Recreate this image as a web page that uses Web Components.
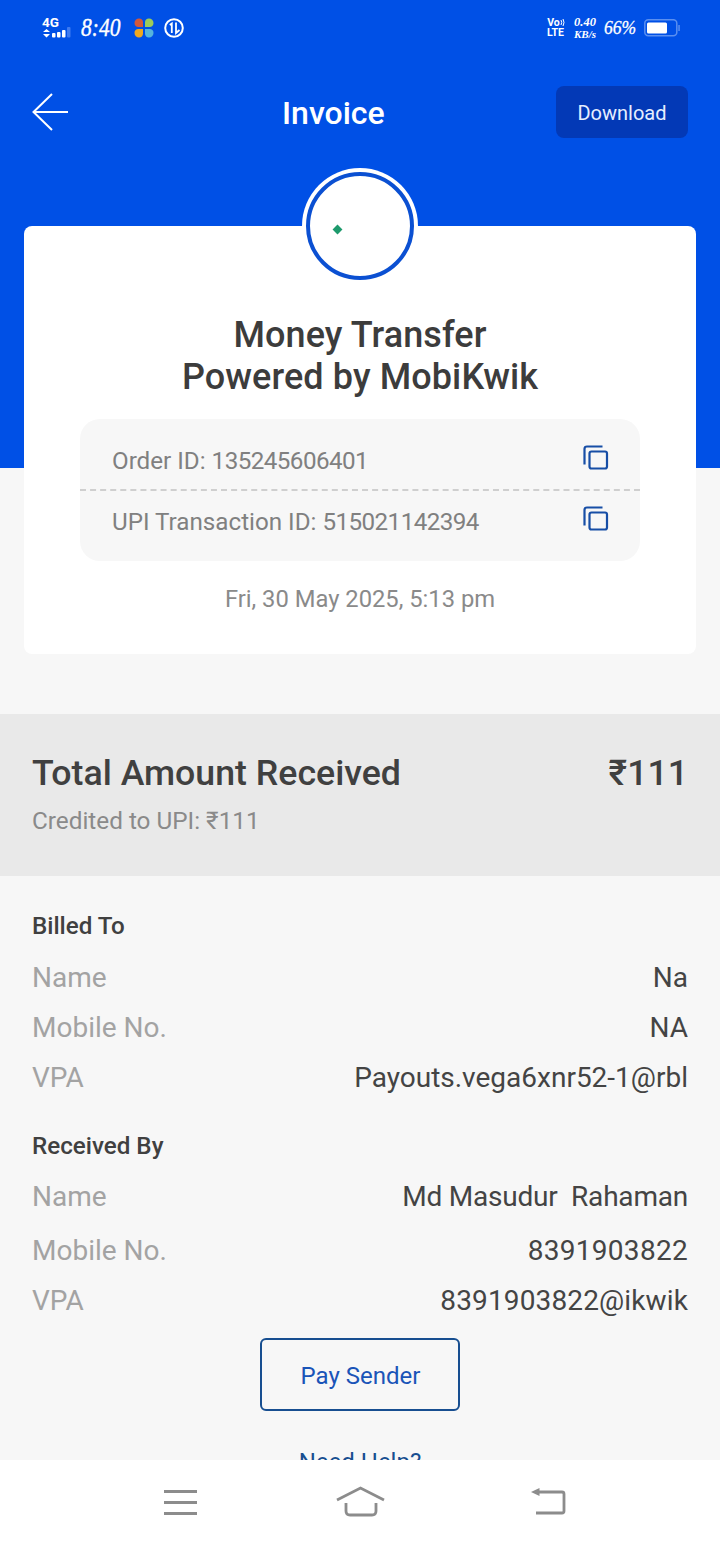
<!DOCTYPE html>
<html>
<head>
<meta charset="utf-8">
<title>Invoice</title>
<style>
  html, body { margin: 0; padding: 0; background: #f7f7f7; }
  body { width: 720px; height: 1544px; overflow: hidden; font-family: Roboto, "Noto Sans", sans-serif; }
  .wide { --value-spacing: .3px; }
  .slightly-wide { --value-spacing: .13px; }
  .tight { --value-spacing: -.21px; }
</style>
</head>
<body>
<invoice-screen>
  <status-bar slot="hero"></status-bar>
  <app-bar slot="hero" title="Invoice" action="Download"></app-bar>
  <invoice-card slot="hero"
    heading-one="Money Transfer" heading-two="Powered by MobiKwik"
    order-label="Order ID: " order="135245606401" upi-label="UPI Transaction ID: " upi="515021142394"
    date="Fri, 30 May 2025, 5:13 pm"></invoice-card>
  <total-band slot="body" label="Total Amount Received" amount="₹111" note="Credited to UPI: ₹111"></total-band>
  <detail-group slot="body" title="Billed To">
    <detail-row label="Name" value="Na"></detail-row>
    <detail-row label="Mobile No." value="NA"></detail-row>
    <detail-row label="VPA" value="Payouts.vega6xnr52-1@rbl"></detail-row>
  </detail-group>
  <detail-group slot="body" title="Received By" second>
    <detail-row class="tight" label="Name" value="Md Masudur&nbsp; Rahaman" tall></detail-row>
    <detail-row class="wide" label="Mobile No." value="8391903822" tall></detail-row>
    <detail-row class="slightly-wide" label="VPA" value="8391903822@ikwik" short></detail-row>
  </detail-group>
  <pay-actions slot="body"></pay-actions>
  <nav-bar slot="nav"></nav-bar>
</invoice-screen>

<script>
// Whole screen: blue hero behind the card, scroll area cut off by the nav bar
class InvoiceScreen extends HTMLElement {
  constructor() {
    super();
    this.attachShadow({ mode: 'open' });
    this.shadowRoot.innerHTML = `
      <style>
        :host { display: flex; flex-direction: column; height: 1544px; background: #f7f7f7; }
        .scroll { flex: 1; min-height: 0; overflow: hidden; }
        .hero { background: linear-gradient(#0050e6 468px, transparent 468px); }
      </style>
      <div class="scroll">
        <div class="hero"><slot name="hero"></slot></div>
        <slot name="body"></slot>
      </div>
      <slot name="nav"></slot>
    `;
  }
}

class StatusBar extends HTMLElement {
  constructor() {
    super();
    this.attachShadow({ mode: 'open' });
    this.shadowRoot.innerHTML = `
      <style>
        :host { display: flex; justify-content: space-between; align-items: center; height: 56px; padding: 0 40px 0 42px; color: #fff; }
        .side { display: flex; align-items: center; }
        .time, .pct, .speed { font-family: "Liberation Serif", serif; font-style: italic; }
        .time { font-size: 25px; width: 39px; white-space: nowrap; margin: 0 14px 0 8px; -webkit-text-stroke: .4px #fff; transform: scaleX(.86); transform-origin: left center; }
        .volte { font: 700 10.500px/10px Roboto, sans-serif; text-align: center; margin-right: 10px; width: 17px; white-space: nowrap; }
        .volte svg { display: inline-block; vertical-align: top; margin-right: -2px; }
        .speed { font-weight: 700; font-size: 11px; line-height: 12px; text-align: center; margin-right: 8px; width: 22px; white-space: nowrap; }
        .speed b { font-size: 12.500px; }
        .pct { font-size: 19.500px; width: 32px; white-space: nowrap; -webkit-text-stroke: .3px #fff; margin-right: 8px; transform: scaleX(.9); transform-origin: left center; }
        svg { display: block; }
      </style>
      <div class="side">
        <svg width="31" height="30" viewBox="0 -4 31 30">
          <text x="0" y="10" font-family="Roboto, sans-serif" font-weight="700" font-size="13.500" fill="#fff">4G</text>
          <path d="M1 15l3.500-3 3.500 3zM1 17h7l-3.500 3.500z" fill="#fff"/>
          <rect x="10" y="16" width="3.500" height="4.500" rx="1" fill="#fff"/>
          <rect x="15" y="15" width="3.500" height="5.500" rx="1" fill="#fff"/>
          <rect x="20" y="13" width="3.500" height="7.500" rx="1" fill="#fff"/>
          <rect x="25" y="10" width="3.500" height="10.500" rx="1" fill="#3f7bf0"/>
        </svg>
        <span class="time">8:40</span>
        <svg width="20" height="20" viewBox="0 0 20 20" style="margin-right:10px">
          <path d="M9 9H4.500A3.800 3.800 0 0 1 .5 5 4.500 4.500 0 0 1 5 .5 3.800 3.800 0 0 1 9 4.500z" fill="#d2583a"/>
          <path d="M9 9H4.500A3.800 3.800 0 0 1 .5 5 4.500 4.500 0 0 1 5 .5 3.800 3.800 0 0 1 9 4.500z" fill="#9ccb5a" transform="rotate(90 10 10)"/>
          <path d="M9 9H4.500A3.800 3.800 0 0 1 .5 5 4.500 4.500 0 0 1 5 .5 3.800 3.800 0 0 1 9 4.500z" fill="#55b4dc" transform="rotate(180 10 10)"/>
          <path d="M9 9H4.500A3.800 3.800 0 0 1 .5 5 4.500 4.500 0 0 1 5 .5 3.800 3.800 0 0 1 9 4.500z" fill="#f0a81e" transform="rotate(270 10 10)"/>
        </svg>
        <svg width="20" height="20" viewBox="0 0 20 20">
          <circle cx="10" cy="10" r="8.800" fill="none" stroke="#fff" stroke-width="2"/>
          <path d="M5.800 7l2-1.500V15M12 4.500V15l3.500-3" fill="none" stroke="#fff" stroke-width="1.800"/>
        </svg>
      </div>
      <div class="side">
        <div class="volte">Vo<svg width="6" height="9" viewBox="0 0 6 9" fill="none" stroke="#fff" stroke-width="1"><path d="M1 2q1.500 2.500 0 5M3 1q2 3.500 0 7"/></svg><br>LTE</div>
        <div class="speed"><b>0.40</b><br>KB/s</div>
        <span class="pct">66%</span>
        <svg width="36" height="18" viewBox="0 0 36 18">
          <rect x=".8" y=".8" width="32" height="16" rx="3.500" fill="none" stroke="#5a8ff0" stroke-width="1.500"/>
          <rect x="3" y="3.500" width="20" height="11" rx="1.500" fill="#fff"/>
          <rect x="34.300" y="6" width="1.500" height="6" fill="#5a8ff0"/>
        </svg>
      </div>
    `;
  }
}

class AppBar extends HTMLElement {
  constructor() {
    super();
    this.attachShadow({ mode: 'open' });
    this.shadowRoot.innerHTML = `
      <style>
        :host { display: grid; grid-template-columns: 250px auto 1fr; align-items: center; height: 112px; padding: 0 32px; box-sizing: border-box; }
        svg { display: block; }
        h1 { margin: 0; color: #fff; font: 500 32px/38px Roboto, sans-serif; padding-top: 2px; }
        button { justify-self: end; width: 132px; height: 52px; border: 0; border-radius: 8px; background: #0339b6; color: #e6eeff; font: 400 20px Roboto, sans-serif; padding: 2px 0 0; }
      </style>
      <svg width="38" height="38" viewBox="0 0 38 38">
        <path d="M20 1L1.500 19 20 37M1.500 19H36" fill="none" stroke="#fff" stroke-width="2"/>
      </svg>
      <h1></h1>
      <button></button>
    `;
    this.shadowRoot.querySelector('h1').textContent = this.getAttribute('title');
    this.shadowRoot.querySelector('button').textContent = this.getAttribute('action');
  }
}

class CopyIcon extends HTMLElement {
  constructor() {
    super();
    this.attachShadow({ mode: 'open' });
    this.shadowRoot.innerHTML = `
      <style>:host { display: block; width: 26px; height: 26px; margin-bottom: 6px; } svg { display: block; }</style>
      <svg width="26" height="26" viewBox="0 0 26 26" fill="none" stroke="#174ea6" stroke-width="2.200" stroke-linejoin="round">
        <path d="M19.500 1.500H4Q1.500 1.500 1.500 4v15.500"/>
        <rect x="6.500" y="6.500" width="17.500" height="17" rx="2"/>
      </svg>
    `;
  }
}

class InvoiceCard extends HTMLElement {
  constructor() {
    super();
    this.attachShadow({ mode: 'open' });
    this.shadowRoot.innerHTML = `
      <style>
        :host { display: block; margin: 0 24px; }
        .logo { position: relative; z-index: 1; box-sizing: border-box; width: 116px; height: 116px; margin: 0 auto -58px; border-radius: 50%; background: #fff; padding: 4px; }
        .ring { box-sizing: border-box; width: 108px; height: 108px; border-radius: 50%; border: 4px solid #0b50d2; background: #fff; padding: 50px 0 0 24px; }
        .dot { display: block; width: 7px; height: 7px; background: #1d9a6c; transform: rotate(45deg); }
        .card { background: #fff; border-radius: 8px; height: 428px; box-sizing: border-box; padding-top: 88px; display: flex; flex-direction: column; align-items: center; }
        h2 { margin: 0; font: 500 36px/42px Roboto, sans-serif; letter-spacing: .1px; color: #3c3c3c; text-align: center; }
        .ids { width: 560px; margin-top: 21px; background: #f7f7f7; border-radius: 20px; height: 142px; box-sizing: border-box; color: #808080; font-size: 24.200px; }
        .id { display: flex; justify-content: space-between; align-items: center; height: 70px; padding: 14px 31px 0 32px; box-sizing: border-box; }
        .id + .id { height: 72px; border-top: 2px dashed #cfcfcf; padding: 0 31px 8px 32px; }
        .num { letter-spacing: -.55px; }
        .date { margin-top: 24px; color: #8a8a8a; font-size: 23.750px; line-height: 28px; }
      </style>
      <div class="logo"><div class="ring"><i class="dot"></i></div></div>
      <div class="card">
        <h2><span id="h1"></span><br><span id="h2"></span></h2>
        <div class="ids">
          <div class="id"><span><span id="orderLabel"></span><span class="num" id="order"></span></span><copy-icon></copy-icon></div>
          <div class="id"><span><span id="upiLabel"></span><span class="num" id="upi"></span></span><copy-icon></copy-icon></div>
        </div>
        <div class="date" id="date"></div>
      </div>
    `;
    const $ = id => this.shadowRoot.getElementById(id);
    $('h1').textContent = this.getAttribute('heading-one');
    $('h2').textContent = this.getAttribute('heading-two');
    $('orderLabel').textContent = this.getAttribute('order-label');
    $('order').textContent = this.getAttribute('order');
    $('upiLabel').textContent = this.getAttribute('upi-label');
    $('upi').textContent = this.getAttribute('upi');
    $('date').textContent = this.getAttribute('date');
  }
}

class TotalBand extends HTMLElement {
  constructor() {
    super();
    this.attachShadow({ mode: 'open' });
    this.shadowRoot.innerHTML = `
      <style>
        :host { display: block; margin-top: 60px; height: 162px; box-sizing: border-box; padding: 37px 32px 0; background: #e9e9e9; }
        .top { display: flex; justify-content: space-between; color: #404040; font: 500 35.700px/44px Roboto, sans-serif; }
        .note { margin-top: 10px; color: #8a8a8a; font: 400 24.300px/32px Roboto, sans-serif; }
      </style>
      <div class="top"><span id="label"></span><span id="amount"></span></div>
      <div class="note" id="note"></div>
    `;
    this.shadowRoot.getElementById('label').textContent = this.getAttribute('label');
    this.shadowRoot.getElementById('amount').textContent = this.getAttribute('amount');
    this.shadowRoot.getElementById('note').textContent = this.getAttribute('note');
  }
}

class DetailGroup extends HTMLElement {
  constructor() {
    super();
    this.attachShadow({ mode: 'open' });
    this.shadowRoot.innerHTML = `
      <style>
        :host { display: block; padding: 34px 32px 0; }
        :host([second]) { padding-top: 27px; }
        h3 { margin: 0 0 11px; color: #404040; font: 500 24.200px/32px Roboto, sans-serif; }
        :host([second]) h3 { margin-bottom: 8px; }
      </style>
      <h3></h3>
      <slot></slot>
    `;
    this.shadowRoot.querySelector('h3').textContent = this.getAttribute('title');
  }
}

class DetailRow extends HTMLElement {
  constructor() {
    super();
    this.attachShadow({ mode: 'open' });
    this.shadowRoot.innerHTML = `
      <style>
        :host { display: flex; justify-content: space-between; align-items: center; height: 50px; font: 400 28px/34px Roboto, sans-serif; }
        :host([tall]) { height: 54px; }
        :host([short]) { height: 46px; }
        .label { color: #a3a3a3; }
        .value { color: #444; letter-spacing: var(--value-spacing, 0); }
      </style>
      <span class="label"></span><span class="value"></span>
    `;
    this.shadowRoot.querySelector('.label').textContent = this.getAttribute('label');
    this.shadowRoot.querySelector('.value').textContent = this.getAttribute('value');
  }
}

class PayActions extends HTMLElement {
  constructor() {
    super();
    this.attachShadow({ mode: 'open' });
    this.shadowRoot.innerHTML = `
      <style>
        :host { display: flex; flex-direction: column; align-items: center; padding-top: 14px; }
        button { width: 200px; height: 73px; background: transparent; border: 2px solid #174e90; border-radius: 6px; color: #1a54b8; font: 400 24px Roboto, sans-serif; padding: 2px 0 0 1px; }
        a { margin-top: 36px; color: #174e90; font: 400 24px/30px Roboto, sans-serif; }
      </style>
      <button>Pay Sender</button>
      <a>Need Help?</a>
    `;
  }
}

class NavBar extends HTMLElement {
  constructor() {
    super();
    this.attachShadow({ mode: 'open' });
    this.shadowRoot.innerHTML = `
      <style>
        :host { flex: none; display: flex; align-items: flex-start; height: 84px; box-sizing: border-box; padding: 26px 0 0 163px; background: #fff; }
        svg { display: block; }
      </style>
      <svg width="35" height="30" viewBox="0 0 35 30" fill="none" stroke="#8c8c8c" stroke-width="3">
        <path d="M1 5.500h33M1 16.500h33M1 27.500h33"/>
      </svg>
      <svg width="50" height="32" viewBox="0 0 50 32" fill="none" stroke="#8c8c8c" stroke-width="2.800" style="margin-left:137px">
        <path d="M2 14L25.500 2 49 14M11 17v8q0 4 4 4h22q4 0 4-4v-8"/>
      </svg>
      <svg width="36" height="30" viewBox="0 0 36 30" fill="none" stroke="#8c8c8c" stroke-width="2.800" style="margin-left:145px">
        <path d="M6 6h26q2 0 2 2v17q0 2-2 2H6"/>
        <path d="M1 6l8.500-4v8z" fill="#8c8c8c" stroke="none"/>
      </svg>
    `;
  }
}

customElements.define('invoice-screen', InvoiceScreen);
customElements.define('status-bar', StatusBar);
customElements.define('app-bar', AppBar);
customElements.define('copy-icon', CopyIcon);
customElements.define('invoice-card', InvoiceCard);
customElements.define('total-band', TotalBand);
customElements.define('detail-group', DetailGroup);
customElements.define('detail-row', DetailRow);
customElements.define('pay-actions', PayActions);
customElements.define('nav-bar', NavBar);
</script>
</body>
</html>
